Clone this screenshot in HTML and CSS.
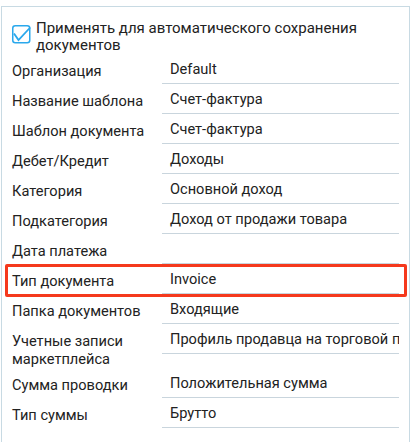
FILE: index.html
```html
<!DOCTYPE html>
<html lang="ru">
<head>
<meta charset="utf-8">
<link rel="stylesheet" href="styles.css">
</head>
<body>
<div class="panel">
  <div class="head">
    <svg class="cb" width="19" height="19" viewBox="0 0 19 19">
      <rect x="0.75" y="0.75" width="17" height="17" rx="2.5" fill="none" stroke="#2aa8ec" stroke-width="1.5"/>
      <path d="M2 8.5 L6.5 15 L18.2 2.5" fill="none" stroke="#2aa8ec" stroke-width="1.8" stroke-linejoin="miter"/>
    </svg>
    <div class="head-text">Применять для автоматического сохранения документов</div>
  </div>
  <div class="rows">
    <div class="row"><div class="lbl">Организация</div><div class="val">Default</div></div>
    <div class="row"><div class="lbl">Название шаблона</div><div class="val">Счет-фактура</div></div>
    <div class="row"><div class="lbl">Шаблон документа</div><div class="val">Счет-фактура</div></div>
    <div class="row"><div class="lbl">Дебет/Кредит</div><div class="val">Доходы</div></div>
    <div class="row"><div class="lbl">Категория</div><div class="val">Основной доход</div></div>
    <div class="row"><div class="lbl">Подкатегория</div><div class="val">Доход от продажи товара</div></div>
    <div class="row"><div class="lbl">Дата платежа</div><div class="val"></div></div>
    <div class="row highlighted"><div class="lbl">Тип документа</div><div class="val">Invoice</div><div class="mark"></div></div>
    <div class="row"><div class="lbl">Папка документов</div><div class="val">Входящие</div></div>
    <div class="row tall"><div class="lbl">Учетные записи маркетплейса</div><div class="val">Профиль продавца на торговой площадке</div></div>
    <div class="row"><div class="lbl">Сумма проводки</div><div class="val">Положительная сумма</div></div>
    <div class="row"><div class="lbl">Тип суммы</div><div class="val">Брутто</div></div>
  </div>
</div>
</body>
</html>
```

FILE: styles.css
```css
html, body {
  margin: 0;
  padding: 0;
  background: #ffffff;
}
body {
  font-family: Roboto, "Noto Sans", sans-serif;
  font-size: 14.6px;
  color: #222222;
  overflow: hidden;
}
.panel {
  margin: 6px 0 0 1px;
  width: 409px;
  height: 460px;
  box-sizing: border-box;
  border: 1px solid #c8dae3;
  border-bottom: none;
  padding: 18px 10px 20px 10px;
}
.head {
  display: flex;
  align-items: flex-start;
  gap: 5px;
}
.cb {
  flex: none;
}
.head-text {
  font-size: 15px;
  line-height: 17px;
  margin-top: -5px;
}
.rows {
  margin-top: 0;
  display: flex;
  flex-direction: column;
}
.row {
  position: relative;
  display: flex;
  align-items: flex-start;
}
.lbl {
  flex: none;
  width: 150px;
  line-height: 18px;
  padding: 8px 0 0;
}
.tall .lbl {
  width: 130px;
  margin-right: 20px;
}
.val {
  flex: 1;
  min-width: 0;
  height: 30px;
  box-sizing: border-box;
  border-bottom: 1px solid #c9d5dd;
  padding: 6px 0 0 8px;
  line-height: 18px;
  white-space: nowrap;
  overflow: hidden;
}
.mark {
  position: absolute;
  left: -7px;
  right: -8px;
  top: 0;
  height: 33px;
  border: 3px solid #f5391d;
  border-radius: 2px;
  box-sizing: border-box;
}
```
